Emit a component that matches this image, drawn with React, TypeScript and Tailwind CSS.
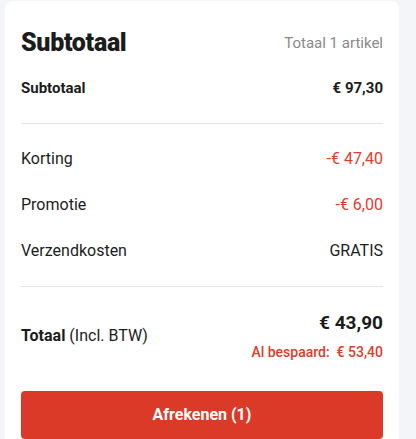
import React from "react";

type RowProps = {
  label: string;
  value: string;
  red?: boolean;
};

const Row = ({ label, value, red }: RowProps) => {
  return (
    <div className="flex items-center justify-between py-[11px] h-[46px]">
      <div className="text-[16px] leading-6 text-[#1c1c1c]">{label}</div>
      <div className={`text-[16px] leading-6 ${red ? "text-[#e23a2c]" : "text-[#1c1c1c]"}`}>{value}</div>
    </div>
  );
};

const App = () => {
  const rows = [
    { label: "Korting", value: "-€ 47,40", red: true },
    { label: "Promotie", value: "-€ 6,00", red: true },
    { label: "Verzendkosten", value: "GRATIS", red: false },
  ];

  return (
    <div
      className="min-h-[439px] bg-[#f4f5f9] pl-[5px] pr-[17px] pt-[1px] overflow-hidden"
      style={{ fontFamily: "Roboto, 'Liberation Sans', sans-serif" }}
    >
      <div className="bg-white rounded-t-lg px-4 pt-[26px] h-[438px]">
        {/* header */}
        <div className="flex items-center justify-between h-8">
          <h2 className="text-[25px] font-black text-[#1c1c1c] leading-8 tracking-[-0.3px]">Subtotaal</h2>
          <span className="text-[15px] text-[#8a8a8a]">Totaal 1 artikel</span>
        </div>
        <div className="flex items-center justify-between mt-[17px] h-6">
          <span className="text-[15px] font-bold text-[#1c1c1c]">Subtotaal</span>
          <span className="text-[15px] font-bold text-[#1c1c1c]">€ 97,30</span>
        </div>
        <div className="mt-[23px] h-px bg-[#e4e4e7]"></div>

        <div className="pt-[12px]">
          {rows.map((item) => (
            <Row key={item.label} label={item.label} value={item.value} red={item.red} />
          ))}
        </div>
        <div className="mt-[12px] h-px bg-[#e4e4e7]"></div>

        {/* total */}
        <div className="mt-[22px] flex items-center justify-between">
          <div className="text-[16px] text-[#1c1c1c]">
            <span className="font-bold">Totaal</span> (Incl. BTW)
          </div>
          <div className="flex flex-col items-end gap-[5px]">
            <div className="text-[19px] leading-7 font-bold text-[#1c1c1c]">€ 43,90</div>
            <div className="text-[14px] leading-5 font-medium text-[#e23a2c]">
              Al bespaard:&nbsp;&nbsp;€ 53,40
            </div>
          </div>
        </div>

        <button className="mt-[29px] w-full h-12 rounded bg-[#db3a29] text-white text-[16px] font-bold">
          Afrekenen (1)
        </button>
      </div>
    </div>
  );
};

export default App;
